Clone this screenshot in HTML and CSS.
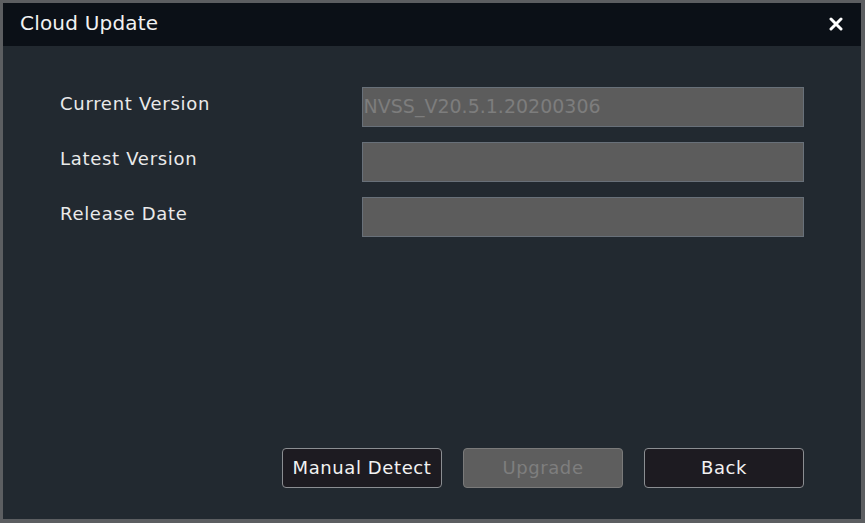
FILE: index.html
```html
<!DOCTYPE html>
<html lang="en">
<head>
    <meta charset="UTF-8">
    <meta name="viewport" content="width=device-width, initial-scale=1.0">
    <title>Cloud Update</title>
    <link rel="stylesheet" href="styles.css">
</head>
<body>
    <div class="dialog">
        <div class="title-bar">
            <span class="title">Cloud Update</span>
            <svg class="close" width="14" height="14" viewBox="0 0 14 14">
                <path d="M2 2 L12 12 M12 2 L2 12" stroke="#fff" stroke-width="3" stroke-linecap="round"/>
            </svg>
        </div>
        <div class="dialog-body">
            <div class="form-row">
                <label>Current Version</label>
                <div class="field">NVSS_V20.5.1.20200306</div>
            </div>
            <div class="form-row">
                <label>Latest Version</label>
                <div class="field"></div>
            </div>
            <div class="form-row">
                <label>Release Date</label>
                <div class="field"></div>
            </div>
        </div>
        <div class="buttons">
            <button>Manual Detect</button>
            <button class="disabled">Upgrade</button>
            <button>Back</button>
        </div>
    </div>
</body>
</html>
```

FILE: styles.css
```css
html, body {
    margin: 0;
    height: 100%;
}
body {
    font-family: "DejaVu Sans", sans-serif;
    background: #5c5e61;
    padding: 3px 4px 4px 3px;
    box-sizing: border-box;
}
.dialog {
    height: 100%;
    background: #222930;
    display: flex;
    flex-direction: column;
}
.title-bar {
    height: 43px;
    background: #0b1017;
    display: flex;
    align-items: center;
    justify-content: space-between;
    padding: 0 18px 0 17px;
}
.title {
    color: #f2f2f2;
    font-size: 20px;
    letter-spacing: 0.2px;
    margin-top: -4px;
}
.close {
    margin-top: -2px;
}
.dialog-body {
    flex: 1;
    padding: 41px 57px 0 57px;
    display: flex;
    flex-direction: column;
    gap: 15px;
}
.form-row {
    display: flex;
    align-items: center;
}
.form-row label {
    width: 302px;
    color: #eaeaea;
    font-size: 18px;
    letter-spacing: 0.7px;
    margin-bottom: 7px;
}
.field {
    width: 440px;
    height: 38px;
    background: #5c5c5c;
    border: 1px solid #687079;
    color: #7d7d7d;
    font-size: 19px;
    line-height: 36px;
    padding-left: 1px;
}
.buttons {
    display: flex;
    justify-content: flex-end;
    gap: 21px;
    padding: 0 57px 31px 0;
}
button {
    width: 160px;
    height: 40px;
    background: #1d1b21;
    border: 1px solid #8b8e92;
    border-radius: 4px;
    color: #f2f2f2;
    font-family: "DejaVu Sans", sans-serif;
    font-size: 18px;
    letter-spacing: 0.6px;
    padding: 0 0 2px;
}
button.disabled {
    background: #5e5e5e;
    border-color: #7a7a7a;
    color: #7e7e7e;
}
```
